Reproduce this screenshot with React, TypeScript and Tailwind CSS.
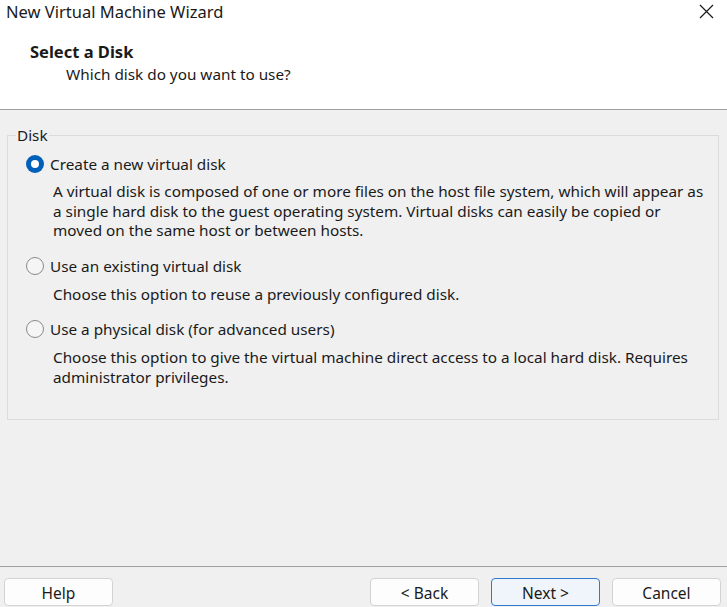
import React, { useState } from "react";

const font = { fontFamily: '"Noto Sans", "Segoe UI", sans-serif' };

type Option = { id: string; label: string; desc: string[]; top: string; gap: string };

const options: Option[] = [
  {
    id: "new",
    label: "Create a new virtual disk",
    top: "",
    gap: "mt-[8px]",
    desc: [
      "A virtual disk is composed of one or more files on the host file system, which will appear as",
      "a single hard disk to the guest operating system. Virtual disks can easily be copied or",
      "moved on the same host or between hosts.",
    ],
  },
  {
    id: "existing",
    label: "Use an existing virtual disk",
    top: "mt-[15px]",
    gap: "mt-[9px]",
    desc: ["Choose this option to reuse a previously configured disk."],
  },
  {
    id: "physical",
    label: "Use a physical disk (for advanced users)",
    top: "mt-[15px]",
    gap: "mt-[9px]",
    desc: [
      "Choose this option to give the virtual machine direct access to a local hard disk. Requires",
      "administrator privileges.",
    ],
  },
];

const Radio = ({ checked }: { checked: boolean }) =>
  checked ? (
    <span className="w-[18px] h-[18px] rounded-full bg-[#005fb8] flex items-center justify-center shrink-0">
      <span className="w-[8px] h-[8px] rounded-full bg-white" />
    </span>
  ) : (
    <span className="w-[18px] h-[18px] rounded-full border border-[#8a8a8a] bg-[#f5f5f5] shrink-0" />
  );

const Btn = ({ children, primary }: { children: React.ReactNode; primary?: boolean }) => (
  <button
    className={
      "w-[109px] h-[28px] rounded-[4px] border text-[15.5px] leading-[28px] text-[#1a1a1a] " +
      (primary ? "bg-[#f0f5fb] border-[#2d7ad0]" : "bg-[#fdfdfd] border-[#d3d3d3]")
    }
  >
    {children}
  </button>
);

export default function App() {
  const [sel, setSel] = useState("new");

  return (
    <div className="w-[727px] h-[607px] bg-[#f0f0f0] flex flex-col overflow-hidden text-[#1a1a1a]" style={font}>
      <div className="bg-white h-[110px] border-b border-[#a0a0a0] shrink-0 relative">
        <div className="pl-[6px] text-[16.5px] leading-[24px]">New Virtual Machine Wizard</div>
        <svg className="absolute left-[699px] top-[4px]" width="15" height="15" viewBox="0 0 15 15">
          <path d="M1 1L14 14M14 1L1 14" stroke="#1a1a1a" strokeWidth="1.2" />
        </svg>
        <div className="pl-[30px] pt-[17px] text-[16.5px] font-bold leading-[22px]">Select a Disk</div>
        <div className="pl-[66px] text-[15.3px] leading-[22px]">Which disk do you want to use?</div>
      </div>

      <div className="pl-[7px] pr-[8px] pt-[15px]">
        <fieldset className="border border-[#dcdcdc] h-[295px] pl-[18px] pr-2 m-0">
          <legend className="text-[15.3px] leading-[20px] px-[1px] ml-[-10px]">Disk</legend>
          <div className="flex flex-col mt-[9px]">
            {options.map((o) => (
              <div key={o.id} className={o.top}>
                <label className="flex items-center gap-[6px] cursor-default" onClick={() => setSel(o.id)}>
                  <Radio checked={sel === o.id} />
                  <span className="text-[15.3px] leading-[20px]">{o.label}</span>
                </label>
                <div className={"pl-[27px] text-[15.3px] leading-[19.5px] " + o.gap}>
                  {o.desc.map((d) => (
                    <div key={d}>{d}</div>
                  ))}
                </div>
              </div>
            ))}
          </div>
        </fieldset>
      </div>

      <div className="mt-auto border-t border-[#a0a0a0] h-[41px] flex items-start pt-[11px] pl-[4px] pr-[6px]">
        <Btn>Help</Btn>
        <div className="ml-auto flex gap-[12px]">
          <Btn>&lt; Back</Btn>
          <Btn primary>Next &gt;</Btn>
          <Btn>Cancel</Btn>
        </div>
      </div>
    </div>
  );
}
